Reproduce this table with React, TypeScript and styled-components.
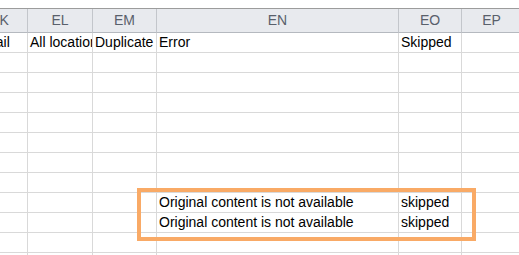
import React from "react";
import styled, { createGlobalStyle } from "styled-components";

const GlobalStyle = createGlobalStyle`
  html, body {
    margin: 0;
    padding: 0;
    background: #ffffff;
    overflow: hidden;
  }
  body {
    font-family: "Liberation Sans", Arial, sans-serif;
  }
`;

const Viewport = styled.div`
  width: 519px;
  height: 255px;
  overflow: hidden;
  position: relative;
  background: #ffffff;
`;

const FormulaGap = styled.div`
  height: 8px;
`;

const COLUMNS = "56px 65px 64px 242px 63px 60px";

const Sheet = styled.div`
  display: grid;
  grid-template-columns: ${COLUMNS};
  margin-left: -28px;
  border-top: 1px solid #9c9c9c;
`;

const HeaderCell = styled.div`
  box-sizing: border-box;
  height: 24px;
  background: #e8eaee;
  border-right: 1px solid #c3c6cb;
  border-bottom: 1px solid #b5b9bf;
  color: #59606b;
  font-size: 14px;
  line-height: 23px;
  text-align: center;
  white-space: nowrap;
  overflow: hidden;
`;

const Cell = styled.div`
  box-sizing: border-box;
  height: 20px;
  padding: 0 2px;
  border-right: 1px solid #d9d9d9;
  border-bottom: 1px solid #d9d9d9;
  color: #000;
  font-size: 14px;
  line-height: 19px;
  white-space: nowrap;
  overflow: hidden;
`;

// orange highlight drawn over the two skipped rows
const Highlight = styled.div`
  position: absolute;
  left: 137px;
  top: 188px;
  width: 339px;
  height: 53px;
  box-sizing: border-box;
  border: 4px solid #f9aa66;
  pointer-events: none;
`;

const headers = ["EK", "EL", "EM", "EN", "EO", "EP"];

const rows: string[][] = [
  ["Detail", "All locations", "Duplicate", "Error", "Skipped", ""],
  ...Array.from({ length: 7 }, () => ["", "", "", "", "", ""]),
  ["", "", "", "Original content is not available", "skipped", ""],
  ["", "", "", "Original content is not available", "skipped", ""],
  ["", "", "", "", "", ""],
  ["", "", "", "", "", ""],
];

export default function App() {
  return (
    <Viewport>
      <GlobalStyle />
      <FormulaGap />
      <Sheet>
        {headers.map((h) => (
          <HeaderCell key={h}>{h}</HeaderCell>
        ))}
        {rows.map((row, r) =>
          row.map((value, c) => <Cell key={`${r}-${c}`}>{value}</Cell>)
        )}
      </Sheet>
      <Highlight />
    </Viewport>
  );
}
